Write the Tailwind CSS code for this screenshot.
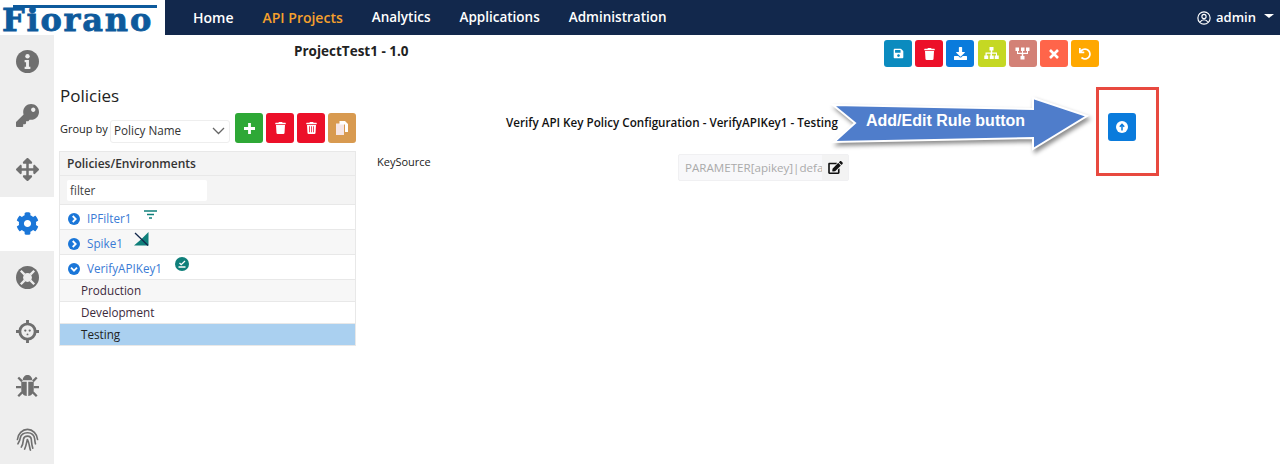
<!DOCTYPE html>
<html lang="en">
<head>
    <meta charset="UTF-8">
    <title>Fiorano API Projects</title>
    <script src="https://cdn.jsdelivr.net/npm/@tailwindcss/browser@4"></script>
</head>
<body class="bg-white h-[464px] w-[1280px] overflow-hidden font-['Open_Sans',sans-serif] text-[12px] text-[#222]">
    <!-- top bar -->
    <header class="flex h-[35px]">
        <div class="w-[165px] relative bg-white">
            <div class="absolute left-[13px] top-[5px] w-[144px] h-[3px] bg-[#0d5a9c]"></div>
            <span class="absolute left-[2px] top-[1px] font-['DejaVu_Serif',serif] font-bold text-[32px] leading-[38px] text-[#0d5a9c] tracking-[1.8px] [-webkit-text-stroke:0.8px_#0d5a9c]">Fiorano</span>
        </div>
        <nav class="flex-1 bg-[#12284c] flex items-center pl-[28px] pr-[6px] text-white font-semibold text-[13.5px]">
            <a class="mr-[29px] text-[14px]">Home</a>
            <a class="mr-[29px] text-[14px] text-[#f5a02c]">API Projects</a>
            <a class="mr-[29px]">Analytics</a>
            <a class="mr-[29px]">Applications</a>
            <a>Administration</a>
            <div class="ml-auto flex items-center text-[13px]">
                <svg class="w-[14px] h-[14px] mr-[5px]" viewBox="0 0 24 24" fill="none" stroke="white" stroke-width="2"><circle cx="12" cy="12" r="10.5"/><circle cx="12" cy="9.5" r="3.6"/><path d="M5.5 19c1.5-3 3.500-4 6.500-4s5 1 6.500 4"/></svg>
                <span>admin</span>
                <span class="ml-[8px] mb-[3px] w-0 h-0 border-x-[5px] border-x-transparent border-t-[4px] border-t-white"></span>
            </div>
        </nav>
    </header>

    <div class="flex h-[429px]">
        <!-- side icons -->
        <aside class="w-[54px] bg-[#eeeeee] flex flex-col">
            <div class="h-[54px] shrink-0 pb-[2px] flex items-center justify-center">
                <svg class="w-[23px] h-[23px]" viewBox="0 0 24 24"><circle cx="12" cy="12" r="12" fill="#6f6f6f"/><circle cx="12" cy="6.500" r="2.300" fill="#eee"/><path d="M9 10.500h4.500v7H15v2.200H9v-2.200h1.500v-4.800H9z" fill="#eee"/></svg>
            </div>
            <div class="h-[54px] shrink-0 pb-[2px] flex items-center justify-center">
                <svg class="w-[23px] h-[23px]" viewBox="0 0 512 512" fill="#6f6f6f"><path d="M512 176.001C512 273.203 433.202 352 336 352c-11.22 0-22.19-1.062-32.827-3.069l-24.012 27.014A23.999 23.999 0 0 1 261.223 384H224v40c0 13.255-10.745 24-24 24h-40v40c0 13.255-10.745 24-24 24H24c-13.255 0-24-10.745-24-24v-78.059c0-6.365 2.529-12.47 7.029-16.971l161.802-161.802C163.108 213.814 160 195.271 160 176 160 78.798 238.797.001 335.999 0 433.488-.001 512 78.511 512 176.001zM336 128c0 26.51 21.49 48 48 48s48-21.49 48-48-21.49-48-48-48-48 21.49-48 48z"/></svg>
            </div>
            <div class="h-[54px] shrink-0 pb-[2px] flex items-center justify-center">
                <svg class="w-[23px] h-[23px]" viewBox="0 0 512 512" fill="#6f6f6f"><path d="M352.201 425.775l-79.196 79.196c-9.373 9.373-24.568 9.373-33.941 0l-79.196-79.196c-15.119-15.119-4.411-40.971 16.971-40.97h51.162L228 284H127.196v51.162c0 21.382-25.851 32.09-40.971 16.971L7.029 272.937c-9.373-9.373-9.373-24.569 0-33.941L86.225 159.8c15.119-15.119 40.971-4.411 40.971 16.971V228H228V127.196h-51.23c-21.382 0-32.09-25.851-16.971-40.971l79.196-79.196c9.373-9.373 24.568-9.373 33.941 0l79.196 79.196c15.119 15.119 4.411 40.971-16.971 40.971h-51.162V228h100.804v-51.162c0-21.382 25.851-32.09 40.97-16.971l79.196 79.196c9.373 9.373 9.373 24.569 0 33.941L425.773 352.2c-15.119 15.119-40.971 4.411-40.97-16.971V284H284v100.804h51.23c21.382 0 32.09 25.851 16.971 40.971z"/></svg>
            </div>
            <div class="h-[54px] shrink-0 pb-[2px] bg-white flex items-center justify-center">
                <svg class="w-[23px] h-[23px]" viewBox="0 0 512 512" fill="#1a76d8"><path d="M487.4 315.7l-42.6-24.6c4.3-23.2 4.3-47 0-70.2l42.6-24.6c4.9-2.8 7.1-8.6 5.5-14-11.1-35.6-30-67.8-54.7-94.6-3.8-4.1-10-5.1-14.8-2.3L380.8 110c-17.9-15.4-38.5-27.3-60.8-35.1V25.8c0-5.6-3.9-10.5-9.4-11.7-36.7-8.2-74.3-7.8-109.2 0-5.5 1.2-9.4 6.1-9.4 11.7V75c-22.2 7.9-42.8 19.8-60.8 35.1L88.7 85.5c-4.9-2.8-11-1.9-14.8 2.3-24.7 26.7-43.6 58.9-54.7 94.6-1.7 5.4.6 11.2 5.5 14L67.3 221c-4.3 23.2-4.3 47 0 70.2l-42.6 24.6c-4.9 2.8-7.1 8.6-5.5 14 11.1 35.6 30 67.8 54.7 94.6 3.8 4.1 10 5.1 14.8 2.3l42.6-24.6c17.9 15.4 38.5 27.3 60.8 35.1v49.2c0 5.6 3.9 10.5 9.4 11.7 36.7 8.2 74.3 7.8 109.2 0 5.5-1.2 9.4-6.1 9.4-11.7v-49.2c22.2-7.9 42.8-19.8 60.8-35.1l42.6 24.6c4.9 2.8 11 1.9 14.8-2.3 24.7-26.7 43.6-58.9 54.7-94.6 1.5-5.5-.7-11.3-5.6-14.1zM256 336c-44.1 0-80-35.9-80-80s35.9-80 80-80 80 35.900 80 80-35.9 80-80 80z"/></svg>
            </div>
            <div class="h-[54px] shrink-0 pb-[2px] flex items-center justify-center">
                <svg class="w-[23px] h-[23px]" viewBox="0 0 24 24"><circle cx="12" cy="12" r="12" fill="#6f6f6f"/><circle cx="12" cy="12" r="4.600" fill="#eee"/><path d="M5 5l4 4M19 5l-4 4M5 19l4-4M19 19l-4-4" stroke="#eee" stroke-width="2.400"/></svg>
            </div>
            <div class="h-[54px] shrink-0 pb-[2px] flex items-center justify-center">
                <svg class="w-[23px] h-[23px]" viewBox="0 0 24 24" fill="none" stroke="#6f6f6f"><circle cx="12" cy="12" r="8" stroke-width="3"/><path d="M12 0v5M12 19v5M0 12h5M19 12h5" stroke-width="3"/><circle cx="9.700" cy="11" r="1.200" fill="#6f6f6f" stroke="none"/><circle cx="14.300" cy="11" r="1.200" fill="#6f6f6f" stroke="none"/><circle cx="12" cy="15" r="1" fill="#6f6f6f" stroke="none"/></svg>
            </div>
            <div class="h-[54px] shrink-0 pb-[2px] flex items-center justify-center">
                <svg class="w-[23px] h-[23px]" viewBox="0 0 24 24" fill="#6f6f6f"><path d="M7 6.500C7 3 9.500 1 12 1s5 2 5 5.500z"/><path d="M5.500 8h5.700v15C8 23 5.500 20 5.500 16.500zM12.800 8h5.700v8.500c0 3.500-2.500 6.500-5.700 6.500z"/><path d="M0 12.500h5.500v2.400H0zM18.500 12.500H24v2.400h-5.500zM1.500 4.500l1.700-1.700 4 4-1.700 1.700zM22.500 4.500l-1.700-1.700-4 4 1.700 1.700zM1.500 22.500l4.200-4.500 1.700 1.700-4.200 4.300zM22.500 22.500L18.300 18l-1.700 1.700 4.200 4.300z"/></svg>
            </div>
            <div class="h-[54px] shrink-0 pb-[2px] flex items-center justify-center">
                <svg class="w-[23px] h-[23px]" viewBox="0 0 24 24" fill="none" stroke="#6f6f6f" stroke-width="1.700" stroke-linecap="round"><path d="M1.500 12C2 6 6.500 1.500 12 1.500S22 6 22.500 12"/><path d="M2 16.500C3 14.500 4 13 4.300 11 5 7.500 8 5 12 5s7 2.500 7.500 6.500c.2 1.500.2 3 .8 5"/><path d="M5.500 20C7.500 17 7.500 14 7.800 11.500 8.200 9.500 10 8.500 12 8.500s3.800 1.500 4 3.500c.3 3 .3 6 1.500 9"/><path d="M9 22c1.500-3 2-6.500 2.800-10M15 23c-1-3-1-7-3-11" /></svg>
            </div>
        </aside>

        <main class="flex-1 relative">
            <!-- project title and toolbar -->
            <div class="flex h-[45px] items-start">
                <h1 class="ml-[240px] mt-[6px] font-bold text-[13.5px] text-[#222] w-[114px] whitespace-nowrap">ProjectTest1 - 1.0</h1>
                <div class="ml-[476px] mt-[5px] flex gap-[3.2px]">
                    <button class="w-[28px] h-[27px] rounded-[3px] bg-[#0b8bbf] flex items-center justify-center"><svg class="w-[11px] h-[11px]" viewBox="0 0 448 512" fill="white"><path d="M433.941 129.941l-83.882-83.882A48 48 0 0 0 316.118 32H48C21.49 32 0 53.49 0 80v352c0 26.51 21.49 48 48 48h352c26.51 0 48-21.49 48-48V163.882a48 48 0 0 0-14.059-33.941zM224 416c-35.346 0-64-28.654-64-64 0-35.346 28.654-64 64-64s64 28.654 64 64c0 35.346-28.654 64-64 64zm96-304.520V212c0 6.627-5.373 12-12 12H76c-6.627 0-12-5.373-12-12V108c0-6.627 5.373-12 12-12h228.520c3.183 0 6.235 1.264 8.485 3.515l3.480 3.480A11.996 11.996 0 0 1 320 111.480z"/></svg></button>
                    <button class="w-[28px] h-[27px] rounded-[3px] bg-[#ec1029] flex items-center justify-center"><svg class="w-[11px] h-[12px]" viewBox="0 0 448 512" fill="white"><path d="M432 32H312l-9.400-18.700A24 24 0 0 0 281.100 0H166.800a23.720 23.720 0 0 0-21.400 13.300L136 32H16A16 16 0 0 0 0 48v32a16 16 0 0 0 16 16h416a16 16 0 0 0 16-16V48a16 16 0 0 0-16-16zM53.200 467a48 48 0 0 0 47.900 45h245.800a48 48 0 0 0 47.900-45L416 128H32z"/></svg></button>
                    <button class="w-[28px] h-[27px] rounded-[3px] bg-[#0a7bdc] flex items-center justify-center"><svg class="w-[13px] h-[13px]" viewBox="0 0 512 512" fill="white"><path d="M216 0h80c13.300 0 24 10.700 24 24v168h87.700c17.800 0 26.700 21.500 14.100 34.100L269.700 378.300c-7.500 7.500-19.800 7.500-27.300 0L90.100 226.100c-12.600-12.600-3.700-34.100 14.100-34.100H192V24c0-13.300 10.700-24 24-24zm296 376v112c0 13.300-10.700 24-24 24H24c-13.300 0-24-10.700-24-24V376c0-13.300 10.700-24 24-24h146.700l49 49c20.100 20.100 52.500 20.100 72.600 0l49-49H488c13.300 0 24 10.700 24 24z"/></svg></button>
                    <button class="w-[28px] h-[27px] rounded-[3px] bg-[#c5d823] flex items-center justify-center"><svg class="w-[15px] h-[13px]" viewBox="0 0 30 26" fill="white"><path d="M11 0h8v7h-2.500v4H26v6h3.500v7h-8v-7h2.500v-3.500h-8V17h3.500v7h-8v-7H13v-3.500H5.500V17H8.500v7h-8v-7H3v-6h10.500V7H11z"/></svg></button>
                    <button class="w-[28px] h-[27px] rounded-[3px] bg-[#d38176] flex items-center justify-center"><svg class="w-[15px] h-[13px]" viewBox="0 0 30 26" fill="white"><g transform="matrix(1 0 0 -1 0 25)"><path d="M11 0h8v7h-2.500v4H26v6h3v7h-7v-7h2v-3.500h-8V17h3v7h-7v-7h2v-3.500H6V17h2v7H1v-7h3v-6h9.500V7H11z"/></g></svg></button>
                    <button class="w-[28px] h-[27px] rounded-[3px] bg-[#ff654a] flex items-center justify-center"><svg class="w-[10px] h-[10px]" viewBox="0 0 10 10" fill="none" stroke="white" stroke-width="2.600"><path d="M1 1l8 8M9 1l-8 8"/></svg></button>
                    <button class="w-[28px] h-[27px] rounded-[3px] bg-[#ffa800] flex items-center justify-center"><svg class="w-[12px] h-[12px]" viewBox="0 0 512 512" fill="white"><path d="M212.333 224.333H12c-6.627 0-12-5.373-12-12V12C0 5.373 5.373 0 12 0h48c6.627 0 12 5.373 12 12v78.112C117.773 39.279 184.260 7.470 258.175 8.007c136.906.994 246.448 111.623 246.157 248.532C504.041 393.258 393.120 504 256.333 504c-64.089 0-122.496-24.313-166.510-64.215-5.099-4.622-5.334-12.554-.467-17.420l33.967-33.967c4.474-4.474 11.662-4.717 16.401-.525C170.760 415.336 211.580 432 256.333 432c97.268 0 176-78.716 176-176 0-97.267-78.716-176-176-176-58.496 0-110.280 28.476-142.274 72.333h98.274c6.627 0 12 5.373 12 12v48c0 6.627-5.373 12-12 12z"/></svg></button>
                </div>
            </div>

            <div class="flex">
                <!-- policies column -->
                <section class="w-[297px] ml-[5px] shrink-0">
                    <h2 class="ml-[1px] mt-[4px] text-[17px] leading-[24px] font-medium text-[#222] h-[29px]">Policies</h2>
                    <div class="flex items-center h-[30px] ml-[1px] text-[11px]">
                        <span class="w-[50px] mt-[2px]">Group by</span>
                        <div class="w-[120px] h-[23px] mt-[6px] border border-[#eee] rounded-[3px] bg-white flex items-center justify-between pl-[3px] pr-[4px] text-[11.7px] text-[#333]">
                            <span>Policy Name</span>
                            <svg class="w-[13px] h-[8px]" viewBox="0 0 13 8" fill="none" stroke="#666" stroke-width="1.300"><path d="M1 1l5.500 5.500L12 1"/></svg>
                        </div>
                        <div class="ml-[5px] flex gap-[3px]">
                            <button class="w-[28px] h-[30px] rounded-[3px] bg-[#2ea836] flex items-center justify-center"><svg class="w-[11px] h-[11px]" viewBox="0 0 11 11" fill="none" stroke="white" stroke-width="2.800"><path d="M5.500 0v11M0 5.500h11"/></svg></button>
                            <button class="w-[28px] h-[30px] rounded-[3px] bg-[#ec1029] flex items-center justify-center"><svg class="w-[11px] h-[12px]" viewBox="0 0 448 512" fill="white"><path d="M432 32H312l-9.400-18.700A24 24 0 0 0 281.100 0H166.800a23.720 23.720 0 0 0-21.400 13.300L136 32H16A16 16 0 0 0 0 48v32a16 16 0 0 0 16 16h416a16 16 0 0 0 16-16V48a16 16 0 0 0-16-16zM53.200 467a48 48 0 0 0 47.900 45h245.800a48 48 0 0 0 47.900-45L416 128H32z"/></svg></button>
                            <button class="w-[28px] h-[30px] rounded-[3px] bg-[#ec1029] flex items-center justify-center"><svg class="w-[11px] h-[12px]" viewBox="0 0 448 512" fill="white"><path fill-rule="evenodd" d="M432 32H312l-9.400-18.700A24 24 0 0 0 281.100 0H166.800a23.720 23.720 0 0 0-21.400 13.300L136 32H16A16 16 0 0 0 0 48v32a16 16 0 0 0 16 16h416a16 16 0 0 0 16-16V48a16 16 0 0 0-16-16zM53.200 467a48 48 0 0 0 47.900 45h245.800a48 48 0 0 0 47.900-45L416 128H32zM128 184h32v256h-32zM208 184h32v256h-32zM288 184h32v256h-32z"/></svg></button>
                            <button class="w-[28px] h-[30px] rounded-[3px] bg-[#d89a50] flex items-center justify-center"><svg class="w-[12px] h-[14px]" viewBox="0 0 12 14"><path d="M0 2.500h8V14H0z" fill="#f6e6e6"/><path d="M3.500 0H9l3 3v8H9V3.500H3.500z" fill="white"/></svg></button>
                        </div>
                    </div>

                    <div class="mt-[8px] w-[297px] text-[11.7px]">
                        <div class="h-[25px] bg-[#f4f4f4] border border-[#e8e8e8] flex items-center pl-[7px] font-semibold text-[#333] text-[12px]">Policies/Environments</div>
                        <div class="h-[28px] bg-[#f4f4f4] border-x border-[#e8e8e8] flex items-center pl-[7px] pt-[1px]">
                            <div class="w-[140px] h-[21px] bg-white rounded-[2px] pl-[3px] flex items-center text-[#444]">filter</div>
                        </div>
                        <div class="h-[26px] pt-[3px] bg-white border-y border-x border-[#e8e8e8] flex items-center pl-[8px] text-[#3a7bd5]">
                            <svg class="w-[12px] h-[12px] mr-[7px]" viewBox="0 0 12 12"><circle cx="6" cy="6" r="6" fill="#1a76d8"/><path d="M4.700 3l3 3-3 3" fill="none" stroke="white" stroke-width="1.800"/></svg>
                            <span>IPFilter1</span>
                            <svg class="w-[13px] h-[9px] ml-[13px] mb-[9px]" viewBox="0 0 13 9" fill="none"><path d="M0 1h13" stroke="#0f7f7a" stroke-width="1.500"/><path d="M3 4.500h7" stroke="#0f7f7a" stroke-width="1.500"/><path d="M5 8h3" stroke="#0f7f7a" stroke-width="1.500"/></svg>
                        </div>
                        <div class="h-[25px] pt-[3px] bg-[#f7f7f7] border-b border-x border-[#e8e8e8] flex items-center pl-[8px] text-[#3a7bd5]">
                            <svg class="w-[12px] h-[12px] mr-[7px]" viewBox="0 0 12 12"><circle cx="6" cy="6" r="6" fill="#1a76d8"/><path d="M4.700 3l3 3-3 3" fill="none" stroke="white" stroke-width="1.800"/></svg>
                            <span>Spike1</span>
                            <svg class="w-[15px] h-[14px] ml-[11px] mb-[9px]" viewBox="0 0 15 14"><path d="M0 13.500h14.500V0L7.500 7z" fill="#0f7f7a"/><path d="M1 1l13 12.500" stroke="#12284c" stroke-width="1.300"/></svg>
                        </div>
                        <div class="h-[25px] pt-[3px] bg-white border-b border-x border-[#e8e8e8] flex items-center pl-[8px] text-[#3a7bd5]">
                            <svg class="w-[12px] h-[12px] mr-[7px]" viewBox="0 0 12 12"><circle cx="6" cy="6" r="6" fill="#1a76d8"/><path d="M3 4.700l3 3 3-3" fill="none" stroke="white" stroke-width="1.800"/></svg>
                            <span>VerifyAPIKey1</span>
                            <svg class="w-[14px] h-[14px] ml-[13px] mb-[9px]" viewBox="0 0 14 14" fill="none"><circle cx="7" cy="7" r="7" fill="#0f7f7a"/><path d="M4.500 6l1.700 1.700L10 4M3.500 10h7" stroke="white" stroke-width="1.300"/></svg>
                        </div>
                        <div class="h-[22px] bg-[#f7f7f7] border-b border-x border-[#e8e8e8] flex items-center pl-[21px] text-[#3c2a3c]">Production</div>
                        <div class="h-[22px] bg-white border-b border-x border-[#e8e8e8] flex items-center pl-[21px] text-[#3c2a3c]">Development</div>
                        <div class="h-[22px] bg-[#aad0f0] border-b border-x border-[#e8e8e8] flex items-center pl-[21px] text-[#222]">Testing</div>
                    </div>
                </section>

                <!-- policy configuration -->
                <section class="flex-1">
                    <div class="ml-[150px] mt-[34px] h-[18px] flex items-center font-semibold text-[11.65px] text-[#111] whitespace-nowrap">Verify API Key Policy Configuration - VerifyAPIKey1 - Testing</div>
                    <div class="flex mt-[22px] ml-[21px]">
                        <span class="w-[301px] text-[11px]">KeySource</span>
                        <div class="flex h-[27px] w-[171px] border border-[#f0f0f2] rounded-[2px] bg-[#f8f8fa] text-[#aaa] text-[11.6px]">
                            <div class="w-[143px] pl-[6px] overflow-hidden whitespace-nowrap leading-[25px]">PARAMETER[apikey]|default</div>
                            <div class="flex-1 bg-[#f3f3f3] flex items-center justify-center"><svg class="w-[15px] h-[13px]" viewBox="0 0 576 512" fill="#111"><path d="M402.600 83.200l90.200 90.200c3.800 3.800 3.800 10 0 13.800L274.400 405.600l-92.800 10.300c-12.400 1.400-22.900-9.100-21.500-21.500l10.300-92.800L388.800 83.200c3.800-3.800 10-3.800 13.800 0zm162-22.900l-48.800-48.800c-15.200-15.200-39.900-15.200-55.200 0l-35.400 35.400c-3.800 3.800-3.800 10 0 13.800l90.200 90.200c3.800 3.800 10 3.800 13.800 0l35.400-35.400c15.200-15.300 15.200-40 0-55.200zM384 346.200V448H64V128h229.800c3.200 0 6.200-1.300 8.500-3.500l40-40c7.600-7.600 2.200-20.500-8.500-20.500H48C21.500 64 0 85.500 0 112v352c0 26.500 21.500 48 48 48h352c26.500 0 48-21.500 48-48V306.200c0-10.700-12.900-16-20.500-8.500l-40 40c-2.200 2.300-3.500 5.300-3.500 8.500z"/></svg></div>
                        </div>
                    </div>
                </section>
            </div>

            <!-- screenshot annotation, lies over the page -->
            <svg class="absolute left-[774px] top-[58px] w-[264px] h-[64px] drop-shadow-[2px_3px_2px_rgba(0,0,0,0.45)]" viewBox="0 0 264 64">
                <path d="M5 12L27 30 6 49l199-4v11l54-33L205 5v11z" fill="#4f7dcb" stroke="white" stroke-width="2"/>
            </svg>
            <span class="absolute left-[812px] top-[76px] font-['Liberation_Sans',sans-serif] font-bold text-[16px] leading-[20px] text-white whitespace-nowrap">Add/Edit Rule button</span>
            <div class="absolute left-[1042px] top-[52px] w-[63px] h-[89px] border-[3px] border-[#e8493f]"></div>
            <button class="absolute left-[1054px] top-[78px] w-[28px] h-[28px] rounded-[3px] bg-[#0a7bdc] flex items-center justify-center">
                <svg class="w-[12px] h-[12px]" viewBox="0 0 12 12"><circle cx="6" cy="6" r="6" fill="white"/><path d="M6 9.500V3.500M3.800 5.700L6 3.300l2.200 2.400" fill="none" stroke="#0a7bdc" stroke-width="1.500"/></svg>
            </button>
        </main>
    </div>
</body>
</html>
